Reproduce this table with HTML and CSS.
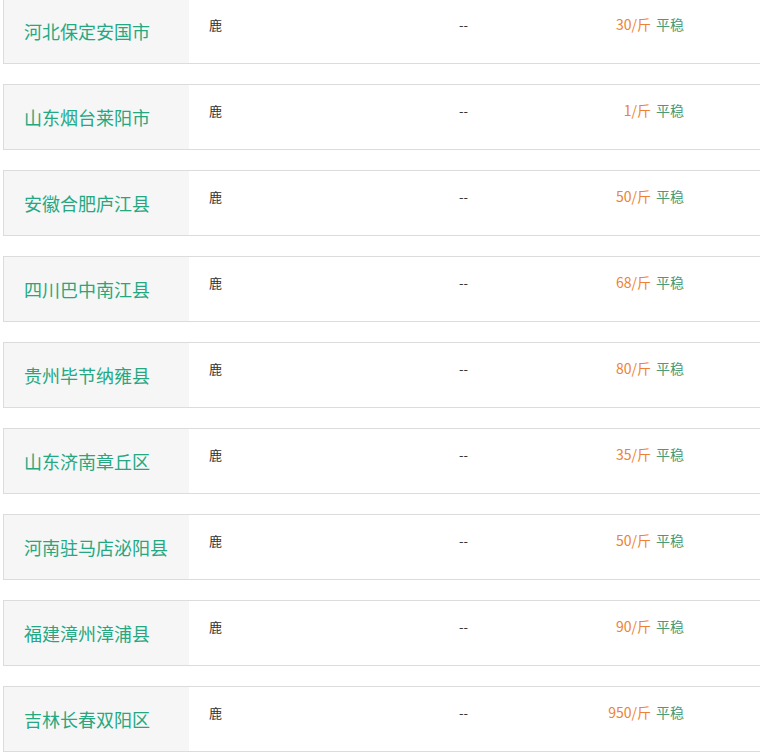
FILE: index.html
```html
<!DOCTYPE html>
<html lang="zh-CN">
<head>
<meta charset="utf-8">
<title>行情</title>
<link rel="stylesheet" href="styles.css">
</head>
<body>
<div class="list">
  <div class="card"><div class="area">河北保定安国市</div><div class="info"><span class="kind">鹿</span><span class="dash">--</span><span class="price">30/斤</span><span class="trend">平稳</span></div></div>
  <div class="card"><div class="area">山东烟台莱阳市</div><div class="info"><span class="kind">鹿</span><span class="dash">--</span><span class="price">1/斤</span><span class="trend">平稳</span></div></div>
  <div class="card"><div class="area">安徽合肥庐江县</div><div class="info"><span class="kind">鹿</span><span class="dash">--</span><span class="price">50/斤</span><span class="trend">平稳</span></div></div>
  <div class="card"><div class="area">四川巴中南江县</div><div class="info"><span class="kind">鹿</span><span class="dash">--</span><span class="price">68/斤</span><span class="trend">平稳</span></div></div>
  <div class="card"><div class="area">贵州毕节纳雍县</div><div class="info"><span class="kind">鹿</span><span class="dash">--</span><span class="price">80/斤</span><span class="trend">平稳</span></div></div>
  <div class="card"><div class="area">山东济南章丘区</div><div class="info"><span class="kind">鹿</span><span class="dash">--</span><span class="price">35/斤</span><span class="trend">平稳</span></div></div>
  <div class="card"><div class="area">河南驻马店泌阳县</div><div class="info"><span class="kind">鹿</span><span class="dash">--</span><span class="price">50/斤</span><span class="trend">平稳</span></div></div>
  <div class="card"><div class="area">福建漳州漳浦县</div><div class="info"><span class="kind">鹿</span><span class="dash">--</span><span class="price">90/斤</span><span class="trend">平稳</span></div></div>
  <div class="card"><div class="area">吉林长春双阳区</div><div class="info"><span class="kind">鹿</span><span class="dash">--</span><span class="price">950/斤</span><span class="trend">平稳</span></div></div>
</div>
</body>
</html>
```

FILE: styles.css
```css
html, body {
  margin: 0;
  padding: 0;
  background: #fff;
  overflow: hidden;
}
body {
  font-family: "Microsoft YaHei", "Noto Sans CJK SC", "Noto Sans", sans-serif;
  color: #333;
}
.list {
  display: flex;
  flex-direction: column;
  gap: 20px;
  margin-top: -2px;
  padding-left: 3px;
}
.card {
  display: flex;
  height: 64px;
  border: 1px solid #dcdcdc;
  border-right: none;
  background: #fff;
}
.area {
  width: 165px;
  flex: none;
  background: #f6f6f6;
  padding-left: 20px;
  display: flex;
  align-items: center;
  font-size: 18px;
  color: #25a882;
  white-space: nowrap;
}
.info {
  display: flex;
  align-items: baseline;
  padding-left: 20px;
  padding-top: 15px;
  line-height: 20px;
}
.kind {
  width: 250px;
  font-size: 13px;
  color: #333;
}
.dash {
  width: 120px;
  font-size: 13px;
  color: #333;
}
.price {
  width: 72px;
  text-align: right;
  font-size: 14px;
  color: #ee8233;
}
.trend {
  margin-left: 5px;
  font-size: 14px;
  color: #4d9a72;
}
```
